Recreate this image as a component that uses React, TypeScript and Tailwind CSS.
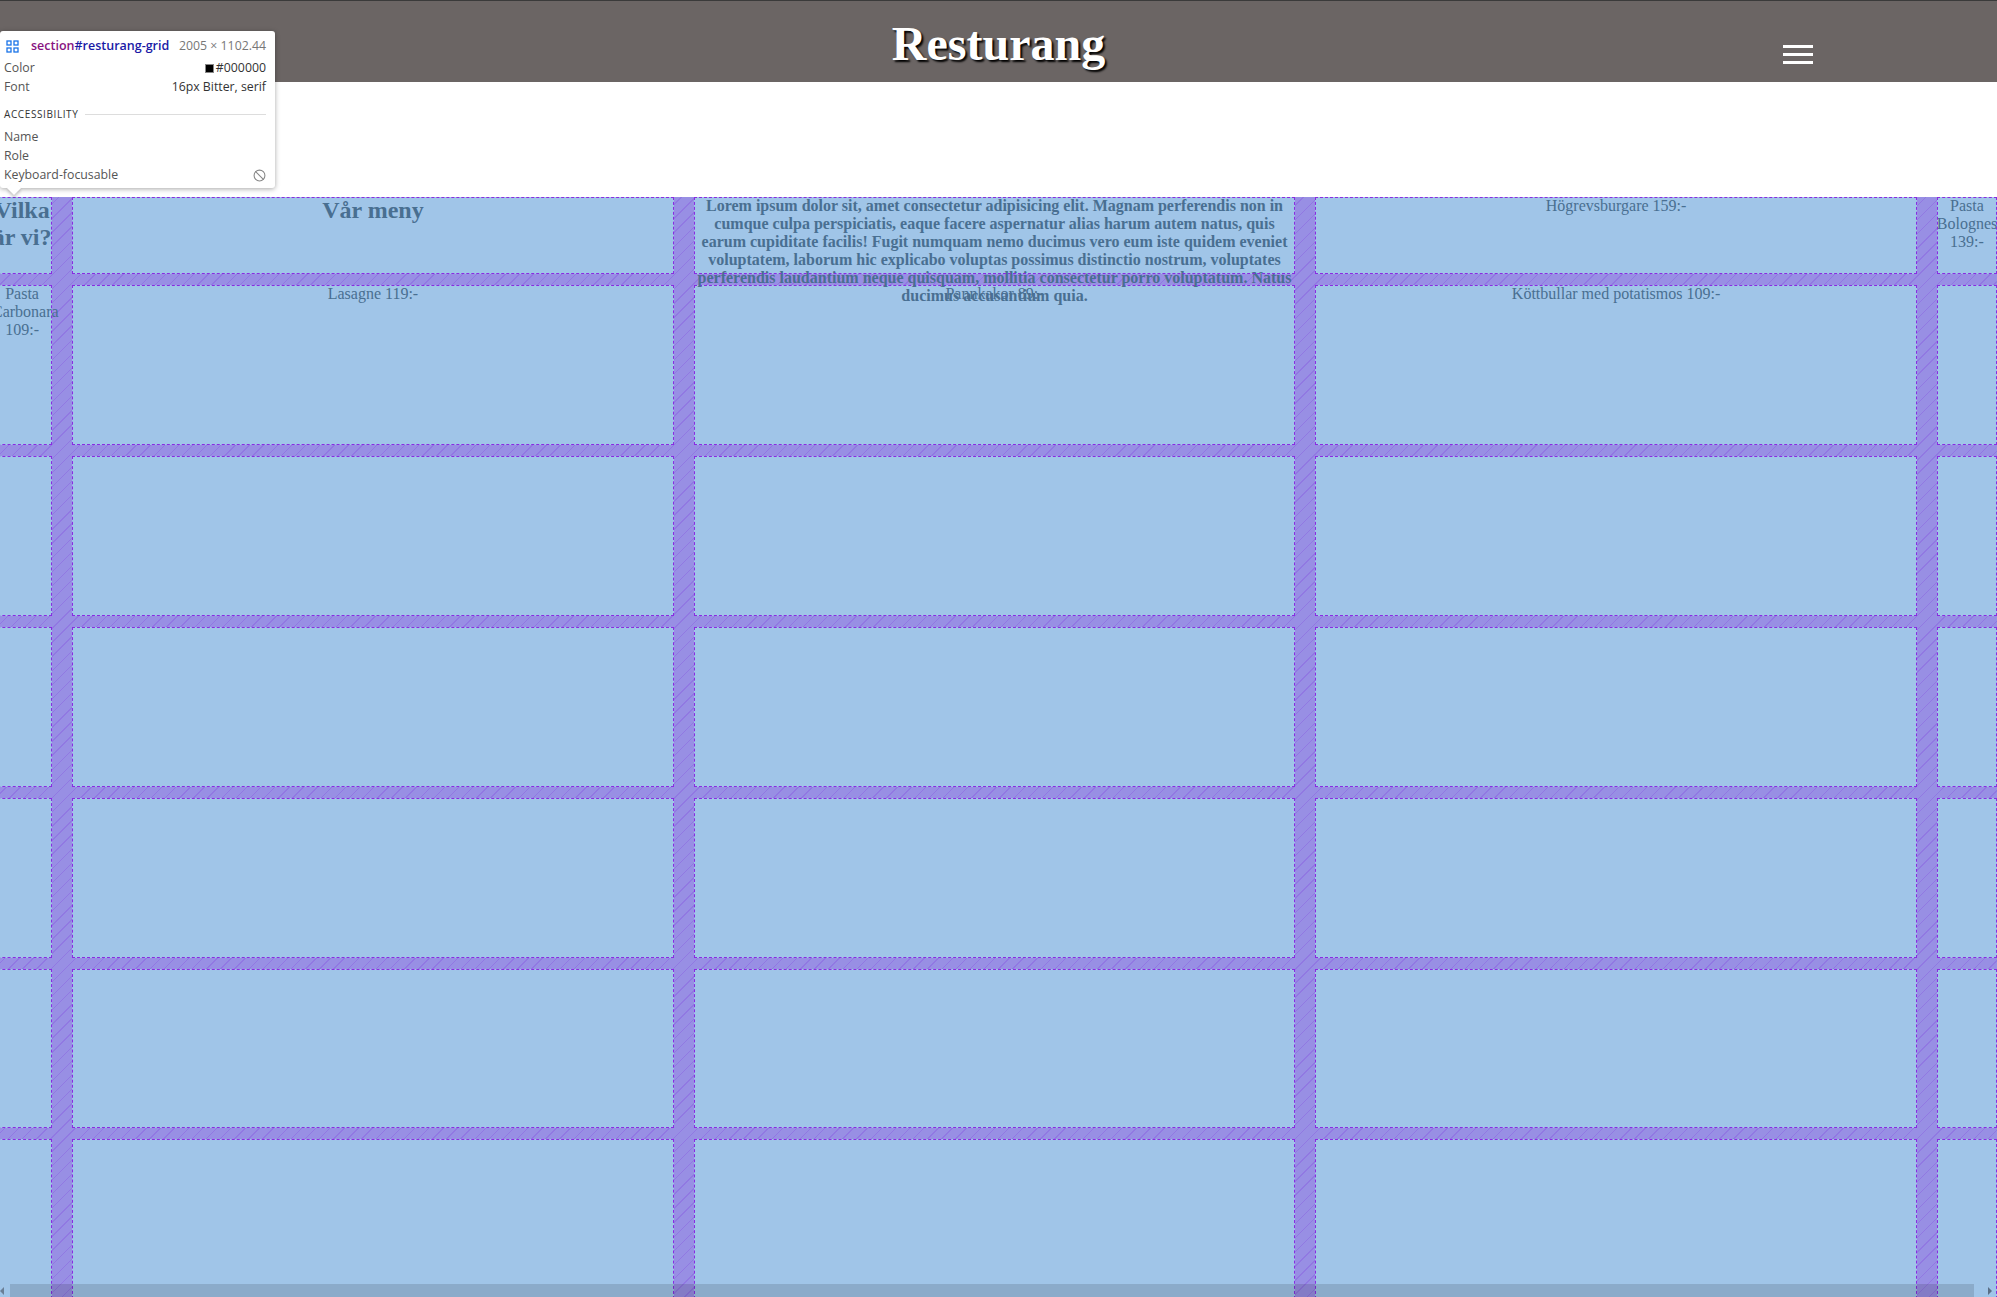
import React from "react";
import { Ban } from "lucide-react";

const lorem =
  "Lorem ipsum dolor sit, amet consectetur adipisicing elit. Magnam perferendis non in cumque culpa perspiciatis, eaque facere aspernatur alias harum autem natus, quis earum cupiditate facilis! Fugit numquam nemo ducimus vero eum iste quidem eveniet voluptatem, laborum hic explicabo voluptas possimus distinctio nostrum, voluptates perferendis laudantium neque quisquam, mollitia consectetur porro voluptatum. Natus ducimus accusantium quia.";

const menu = [
  "Högrevsburgare 159:-",
  "Pasta Bolognese 139:-",
  "Pasta Carbonara 109:-",
  "Lasagne 119:-",
  "Pannkakor 89:-",
  "Köttbullar med potatismos 109:-",
];

const cell =
  "bg-[#a0c5e8] outline-1 outline-dashed outline-[#8a2be2] -outline-offset-1 text-center";

function GridIcon() {
  return (
    <svg width="13" height="13" viewBox="0 0 13 13" fill="none" stroke="#1a73e8" strokeWidth="1.3">
      <rect x="1" y="1" width="4" height="4" />
      <rect x="8" y="1" width="4" height="4" />
      <rect x="1" y="8" width="4" height="4" />
      <rect x="8" y="8" width="4" height="4" />
    </svg>
  );
}

function Tooltip() {
  return (
    <div className="absolute left-0 top-[31px] z-20 w-[275px] rounded-[3px] bg-white pl-[4px] pr-[9px] pt-[6px] pb-[3px] font-['Open_Sans','Noto_Sans',sans-serif] text-[12.3px] leading-none text-[#555] shadow-[0_1px_5px_rgba(0,0,0,0.35)]">
      <div className="flex h-[18px] items-center">
        <span className="ml-[2px] mr-[12px] flex">
          <GridIcon />
        </span>
        <span className="text-[12.5px] font-semibold">
          <span className="text-[#881280]">section</span>
          <span className="text-[#1a1aa6]">#resturang-grid</span>
        </span>
        <span className="ml-auto text-[#777]">2005 × 1102.44</span>
      </div>
      <div className="mt-[4px] flex h-[19px] items-center">
        <span>Color</span>
        <span className="ml-auto flex items-center text-[#333]">
          <span className="mr-[2px] inline-block h-[9px] w-[9px] border border-[#888] bg-black" />
          #000000
        </span>
      </div>
      <div className="flex h-[19px] items-center">
        <span>Font</span>
        <span className="ml-auto text-[#333]">16px Bitter, serif</span>
      </div>
      <div className="mt-[8px] flex h-[18px] items-center gap-[7px]">
        <span className="text-[10px] tracking-[0.06em] text-[#333]">ACCESSIBILITY</span>
        <span className="h-px flex-1 bg-[#ddd]" />
      </div>
      <div className="mt-[5px] flex h-[19px] items-center">Name</div>
      <div className="flex h-[19px] items-center">Role</div>
      <div className="flex h-[19px] items-center">
        <span>Keyboard-focusable</span>
        <Ban className="ml-auto h-[13px] w-[13px] text-[#888]" strokeWidth={2} />
      </div>
      <div className="absolute -bottom-[5px] left-[9px] h-[10px] w-[10px] rotate-45 bg-white shadow-[2px_2px_3px_rgba(0,0,0,0.2)]" />
    </div>
  );
}

function Scrollbar() {
  return (
    <div className="absolute bottom-0 left-0 right-0 flex h-[13px]">
      <div className="flex w-[10px] items-center">
        <span className="h-0 w-0 border-y-[4px] border-r-[4px] border-y-transparent border-r-[#6a7f96]" />
      </div>
      <div className="flex-1 bg-black/[0.13]" />
      <div className="flex w-[23px] items-center justify-end pr-[5px]">
        <span className="h-0 w-0 border-y-[4px] border-l-[4px] border-y-transparent border-l-[#5b6f86]" />
      </div>
    </div>
  );
}

export default function App() {
  const empty = Array.from({ length: 35 - 9 });
  return (
    <div className="relative h-[1297px] w-full overflow-hidden bg-white font-['Liberation_Serif',serif] leading-[normal]">
      <header className="grid h-[82px] grid-cols-[1fr_auto_1fr] border-t border-[#3a3a3a] bg-[#6b6564]">
        <div />
        <h1 className="mt-[15px] text-[48px] font-bold leading-[normal] text-white [text-shadow:2px_2px_2px_#000]">
          Resturang
        </h1>
        <div className="flex justify-end pr-[184px] pt-[44px]">
          <button className="flex flex-col gap-[5px]">
            <span className="h-[3px] w-[30px] bg-white" />
            <span className="h-[3px] w-[30px] bg-white" />
            <span className="h-[3px] w-[30px] bg-white" />
          </button>
        </div>
      </header>

      <section
        id="resturang-grid"
        className="-ml-2 mt-[115px] grid w-[2005px] grid-cols-[minmax(0,1fr)_minmax(0,10fr)_minmax(0,10fr)_minmax(0,10fr)_minmax(0,1fr)] grid-rows-[77px_repeat(6,159.9px)] gap-x-[20px] gap-y-[11px] bg-[#988fe4] bg-[image:repeating-linear-gradient(-45deg,transparent_0px,transparent_9px,rgba(128,70,222,0.3)_9px,rgba(128,70,222,0.3)_10px)] text-[16px] text-[#496f91]"
      >
        <div className={cell}>
          <h2 className="text-[24px] font-bold">Vilka är vi?</h2>
        </div>
        <div className={cell}>
          <h2 className="text-[24px] font-bold">Vår meny</h2>
        </div>
        <div className={`${cell} relative z-10`}>
          <p className="font-bold">{lorem}</p>
        </div>
        {menu.map((m) => (
          <div key={m} className={cell}>
            {m}
          </div>
        ))}
        {empty.map((_, i) => (
          <div key={i} className={cell} />
        ))}
      </section>

      <Tooltip />
      <Scrollbar />
    </div>
  );
}
